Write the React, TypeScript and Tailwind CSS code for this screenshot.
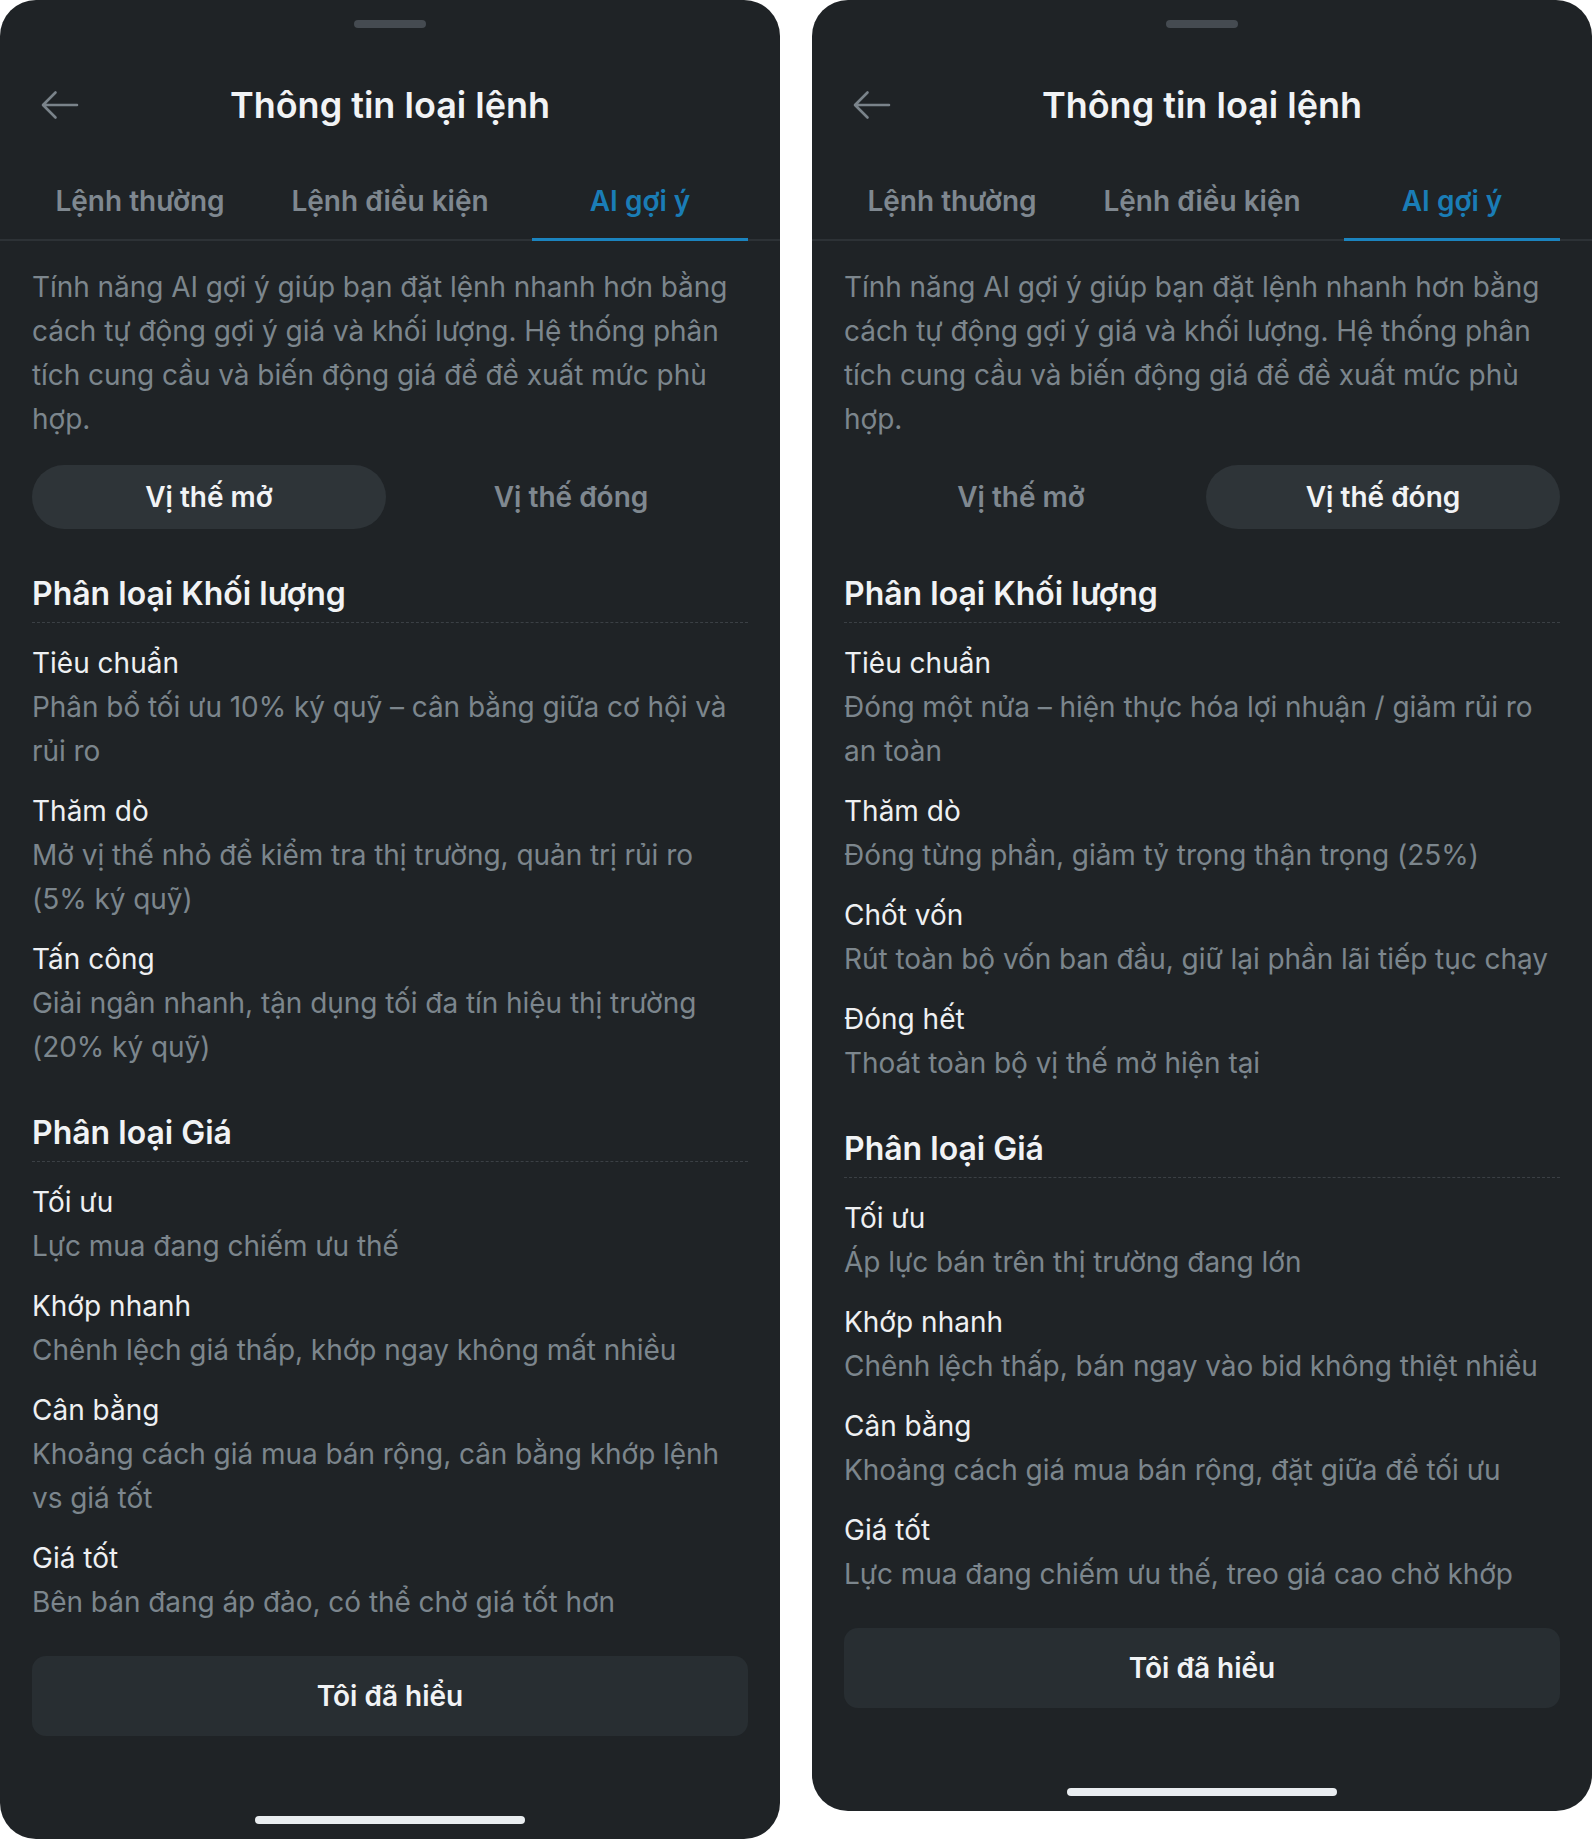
import React from "react";

type Item = { title: string; desc: string };

const volOpen: Item[] = [
  { title: "Tiêu chuẩn", desc: "Phân bổ tối ưu 10% ký quỹ – cân bằng giữa cơ hội và rủi ro" },
  { title: "Thăm dò", desc: "Mở vị thế nhỏ để kiểm tra thị trường, quản trị rủi ro (5% ký quỹ)" },
  { title: "Tấn công", desc: "Giải ngân nhanh, tận dụng tối đa tín hiệu thị trường (20% ký quỹ)" },
];
const priceOpen: Item[] = [
  { title: "Tối ưu", desc: "Lực mua đang chiếm ưu thế" },
  { title: "Khớp nhanh", desc: "Chênh lệch giá thấp, khớp ngay không mất nhiều" },
  { title: "Cân bằng", desc: "Khoảng cách giá mua bán rộng, cân bằng khớp lệnh vs giá tốt" },
  { title: "Giá tốt", desc: "Bên bán đang áp đảo, có thể chờ giá tốt hơn" },
];
const volClose: Item[] = [
  { title: "Tiêu chuẩn", desc: "Đóng một nửa – hiện thực hóa lợi nhuận / giảm rủi ro an toàn" },
  { title: "Thăm dò", desc: "Đóng từng phần, giảm tỷ trọng thận trọng (25%)" },
  { title: "Chốt vốn", desc: "Rút toàn bộ vốn ban đầu, giữ lại phần lãi tiếp tục chạy" },
  { title: "Đóng hết", desc: "Thoát toàn bộ vị thế mở hiện tại" },
];
const priceClose: Item[] = [
  { title: "Tối ưu", desc: "Áp lực bán trên thị trường đang lớn" },
  { title: "Khớp nhanh", desc: "Chênh lệch thấp, bán ngay vào bid không thiệt nhiều" },
  { title: "Cân bằng", desc: "Khoảng cách giá mua bán rộng, đặt giữa để tối ưu" },
  { title: "Giá tốt", desc: "Lực mua đang chiếm ưu thế, treo giá cao chờ khớp" },
];

function BackArrow() {
  return (
    <svg width="38" height="30" viewBox="0 0 38 30" fill="none">
      <path d="M36 15H2.5M14.5 2.5L2 15l12.5 12.5" stroke="#7a838a" strokeWidth="2.6" strokeLinecap="round" strokeLinejoin="round" />
    </svg>
  );
}

function Section({ title, items, className }: { title: string; items: Item[]; className: string }) {
  return (
    <div className={className}>
      <h2 className="text-[32px] leading-[40px] font-semibold text-[#f1f3f5] pb-2 border-b border-dashed border-[#3b4045]">{title}</h2>
      <div className="mt-[18px] flex flex-col gap-4">
        {items.map((it) => (
          <div key={it.title}>
            <div className="text-[28px] leading-[44px] text-[#eef0f2]">{it.title}</div>
            <div className="text-[28px] leading-[44px] text-[#7c868d] tracking-[-0.05px]">{it.desc}</div>
          </div>
        ))}
      </div>
    </div>
  );
}

function Panel({ open }: { open: boolean }) {
  const vol = open ? volOpen : volClose;
  const price = open ? priceOpen : priceClose;
  return (
    <div className="w-[780px] shrink-0 rounded-[36px] bg-[#1f2326] flex flex-col overflow-hidden">
      <div className="flex justify-center pt-5">
        <div className="w-[72px] h-2 rounded-full bg-[#454b51]" />
      </div>
      <div className="relative mt-[53px] h-12 flex items-center justify-center">
        <div className="absolute left-[41px] top-[9px]">
          <BackArrow />
        </div>
        <h1 className="text-[36px] leading-[48px] font-semibold text-[#f1f3f5]">Thông tin loại lệnh</h1>
      </div>
      <div className="mt-[54px] px-8 flex gap-[34px] border-b-2 border-[#2d3236]">
        {["Lệnh thường", "Lệnh điều kiện", "AI gợi ý"].map((t, i) => (
          <div key={t} className="relative flex-1 text-center pb-5">
            <span className={"text-[28px] leading-[36px] font-semibold " + (i === 2 ? "text-[#1a7db6]" : "text-[#7f8890]")}>{t}</span>
            {i === 2 && <div className="absolute left-0 right-0 -bottom-[2px] h-[3px] bg-[#1b84bf]" />}
          </div>
        ))}
      </div>
      <div className="px-8 flex flex-col">
        <p className="mt-6 text-[28px] leading-[44px] text-[#7c868d] tracking-[-0.05px]">
          Tính năng AI gợi ý giúp bạn đặt lệnh nhanh hơn bằng cách tự động gợi ý giá và khối lượng. Hệ thống phân tích cung cầu và biến động giá để đề xuất mức phù hợp.
        </p>
        <div className="mt-6 h-16 flex gap-2">
          <div className={"flex-1 rounded-full flex items-center justify-center text-[28px] font-semibold " + (open ? "bg-[#2e3438] text-[#f1f3f5]" : "text-[#7f8890]")}>Vị thế mở</div>
          <div className={"flex-1 rounded-full flex items-center justify-center text-[28px] font-semibold " + (!open ? "bg-[#2e3438] text-[#f1f3f5]" : "text-[#7f8890]")}>Vị thế đóng</div>
        </div>
        <Section className="mt-[45px]" title="Phân loại Khối lượng" items={vol} />
        <Section className="mt-[44px]" title="Phân loại Giá" items={price} />
        <button className="mt-8 h-20 rounded-[14px] bg-[#282e32] text-[28px] font-semibold text-[#f1f3f5]">Tôi đã hiểu</button>
        <div className="mt-20 pb-[15px] flex justify-center">
          <div className="w-[270px] h-2 rounded-full bg-[#e9edf0]" />
        </div>
      </div>
    </div>
  );
}

export default function App() {
  return (
    <div className="w-[1592px] bg-white flex items-start gap-8" style={{ fontFamily: "Inter, 'Noto Sans', sans-serif" }}>
      <Panel open={true} />
      <Panel open={false} />
    </div>
  );
}
